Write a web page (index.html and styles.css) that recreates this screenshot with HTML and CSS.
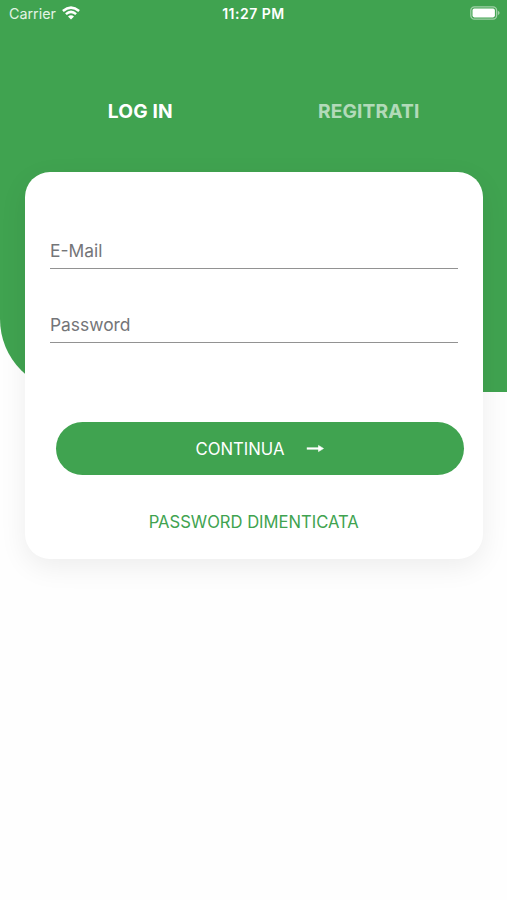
FILE: index.html
```html
<!DOCTYPE html>
<html lang="it">
<head>
<meta charset="utf-8">
<title>Log in</title>
<link rel="stylesheet" href="styles.css">
</head>
<body>
<main class="screen">
  <header class="status">
    <div class="carrier"><span class="carrier-name">Carrier</span>
      <svg class="wifi" viewBox="0 0 18 14"><path d="M.9 5Q9-1.8 17.1 5M3.9 8.1Q9 3.6 14.1 8.1" fill="none" stroke="#fff" stroke-width="2.5"/><path d="M6 10.5Q9 7.8 12 10.5L9 13.6Z" fill="#fff"/></svg>
    </div>
    <span class="time">11:27 PM</span>
    <svg class="battery" viewBox="0 0 31 14"><rect x=".8" y=".8" width="25.8" height="12.4" rx="3.6" fill="none" stroke="#fff" stroke-opacity=".5" stroke-width="1.3"/><rect x="2.5" y="2.6" width="22.4" height="8.8" rx="1.8" fill="#fff"/><path d="M27.9 4.8Q31.4 7 27.9 9.2Z" fill="#fff" fill-opacity=".5"/></svg>
  </header>
  <nav class="tabs"><span class="tab active">LOG IN</span><span class="tab">REGITRATI</span></nav>
  <form class="card">
    <label class="field">E-Mail</label>
    <label class="field">Password</label>
    <button class="continue" type="button"><span>CONTINUA</span><svg class="arrow" viewBox="0 0 18 10"><path d="M.8 4.5H13" stroke="#fff" stroke-width="2.2"/><path d="M12.5 1.4 17.5 4.5l-5 3.1Z" fill="#fff" stroke="#fff" stroke-width=".6" stroke-linejoin="round"/></svg></button>
    <a class="forgot">PASSWORD DIMENTICATA</a>
  </form>
</main>
</body>
</html>
```
FILE: styles.css
```css
* { box-sizing: border-box; }
body { margin: 0; font-family: Inter, "Liberation Sans", sans-serif; background: #fefefe; }
.screen { height: 900px; overflow: hidden; background: #fefefe; position: relative; z-index: 0; }
.screen::before { content: ""; position: absolute; z-index: -1; inset: 0 0 auto; height: 392px; background: #40a350; border-bottom-left-radius: 73px; }
.status { height: 26px; display: grid; grid-template-columns: 1fr auto 1fr; align-items: center; color: #fff; padding: 0 6px 0 9px; font-size: 14.3px; }
.carrier { display: flex; align-items: center; gap: 6px; color: #e3f3e5; }
.wifi { width: 18px; height: 14px; }
.time { font-weight: 600; font-size: 14px; letter-spacing: .5px; margin-left: -3px; }
.battery { width: 31px; height: 14px; justify-self: end; }
.tabs { height: 146px; display: grid; grid-template-columns: 1fr 1fr; padding: 73px 24px 0 26px; text-align: center; color: #fff; font-size: 19.2px; font-weight: 660; letter-spacing: .15px; line-height: 24px; }
.tab { opacity: .6; }
.tab.active { opacity: 1; }
.card { width: 457.5px; height: 387px; margin: 0 25px; padding: 57px 25px 0; background: #fff; border-radius: 25px; box-shadow: 0 8px 28px rgba(0,0,0,.07); }
.field { display: block; height: 40px; width: 408px; border-bottom: 1px solid #929292; color: #747578; font-size: 17.4px; line-height: 43px; margin-bottom: 34px; }
.field + .field { margin-bottom: 79px; }
.continue { width: 408px; height: 53px; margin-left: 6px; border: 0; border-radius: 27px; background: #40a350; color: #fff; font: 16.7px/22px Inter, sans-serif; display: flex; align-items: center; justify-content: center; gap: 22px; padding: 0; }
.arrow { width: 18px; height: 10px; }
.forgot { display: block; text-align: center; color: #40a350; font-size: 16.6px; line-height: 24px; margin-top: 35px; }
```
